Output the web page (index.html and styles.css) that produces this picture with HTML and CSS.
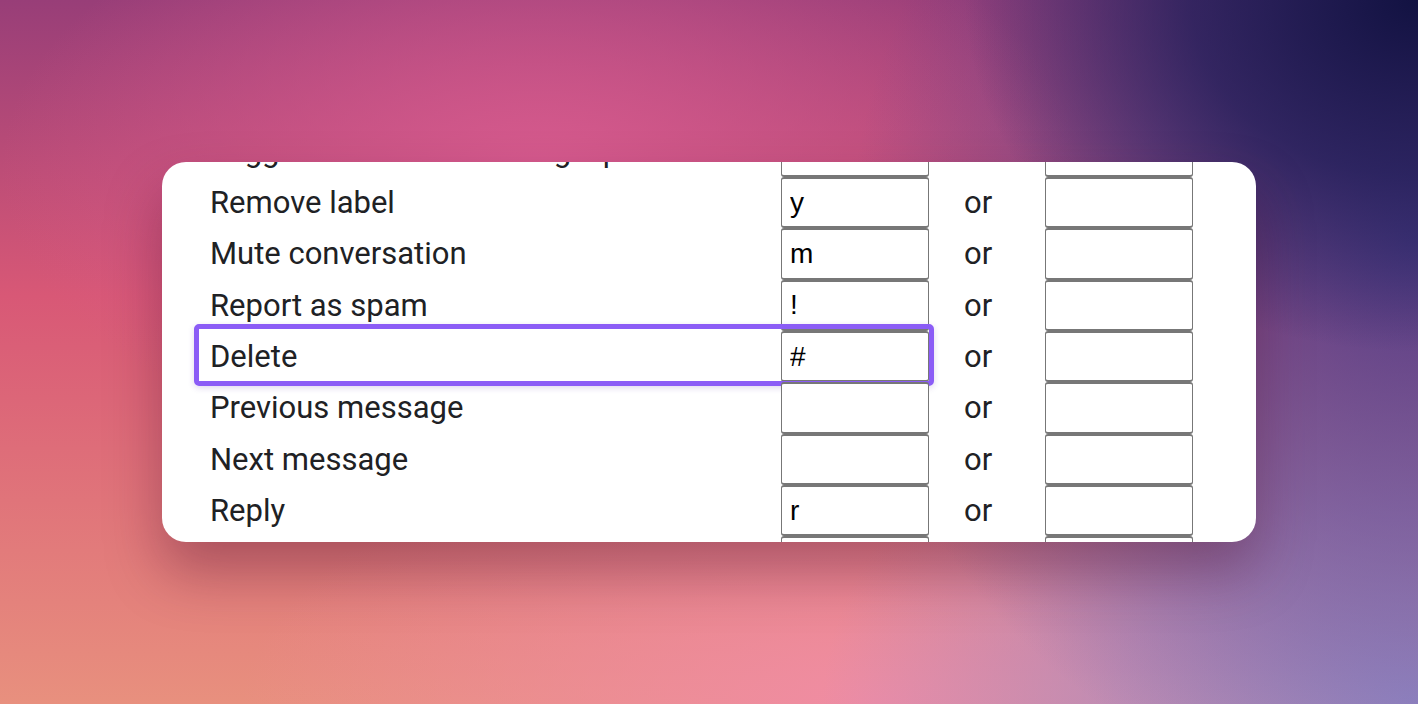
FILE: index.html
```html
<!DOCTYPE html>
<html>
<head>
	<meta charset="utf-8">
	<link rel="stylesheet" href="styles.css">
</head>
<body>

	<div class='card'>
		<div class='shortcuts'>
			<div class='row'>
				<div class='label'>Toggle conversations single pane</div>
				<input class='key' type='text' value=''>
				<div class='or'>or</div>
				<input class='key' type='text' value=''>
			</div>
			<div class='row'>
				<div class='label'>Remove label</div>
				<input class='key' type='text' value='y'>
				<div class='or'>or</div>
				<input class='key' type='text' value=''>
			</div>
			<div class='row'>
				<div class='label'>Mute conversation</div>
				<input class='key' type='text' value='m'>
				<div class='or'>or</div>
				<input class='key' type='text' value=''>
			</div>
			<div class='row'>
				<div class='label'>Report as spam</div>
				<input class='key' type='text' value='!'>
				<div class='or'>or</div>
				<input class='key' type='text' value=''>
			</div>
			<div class='row selected'>
				<div class='label'>Delete</div>
				<input class='key' type='text' value='#'>
				<div class='or'>or</div>
				<input class='key' type='text' value=''>
			</div>
			<div class='row'>
				<div class='label'>Previous message</div>
				<input class='key' type='text' value=''>
				<div class='or'>or</div>
				<input class='key' type='text' value=''>
			</div>
			<div class='row'>
				<div class='label'>Next message</div>
				<input class='key' type='text' value=''>
				<div class='or'>or</div>
				<input class='key' type='text' value=''>
			</div>
			<div class='row'>
				<div class='label'>Reply</div>
				<input class='key' type='text' value='r'>
				<div class='or'>or</div>
				<input class='key' type='text' value=''>
			</div>
			<div class='row'>
				<div class='label'>Reply all</div>
				<input class='key' type='text' value='a'>
				<div class='or'>or</div>
				<input class='key' type='text' value=''>
			</div>
		</div>
	</div>

</body>
</html>
```

FILE: styles.css
```css
html, body
{
	height: 100%;
}
body
{
	margin: 0;
	display: flex;
	align-items: center;
	justify-content: center;
	font-family: Roboto, "Liberation Sans", sans-serif;
	color: #202124;
	background-color: #d8607e;
	background-image:
		radial-gradient(ellipse 32% 50% at 100% 0%, #121242 0%, rgba(24, 24, 80, 0.7) 50%, rgba(40, 36, 100, 0) 100%),
		radial-gradient(ellipse 40% 80% at 100% 34%, rgba(66, 60, 138, 0.9) 0%, rgba(80, 70, 150, 0.55) 50%, rgba(100, 80, 160, 0) 100%),
		radial-gradient(ellipse 42% 55% at 100% 100%, #9a8cc6 0%, rgba(160, 140, 200, 0.6) 50%, rgba(170, 140, 200, 0) 100%),
		radial-gradient(ellipse 38% 42% at 38% 24%, #d65a8e 0%, rgba(214, 90, 142, 0) 100%),
		radial-gradient(ellipse 45% 40% at 62% 100%, #f08ca4 0%, rgba(240, 140, 164, 0) 100%),
		linear-gradient(to bottom, #983e78 0%, #d85876 42%, #e8907e 100%);
}


/*
	Card
*/
.card
{
	position: relative;
	width: 1094px;
	height: 380px;
	background-color: white;
	border-radius: 24px;
	overflow: hidden;
	box-shadow: 0 30px 55px rgba(70, 10, 40, 0.35);
}
.shortcuts
{
	margin-top: -36.33px;
	padding: 0 63px 0 48px;
	display: flex;
	flex-direction: column;
}


/*
	Rows
*/
.row
{
	position: relative;
	display: grid;
	grid-template-columns: 571px 148px 116px 148px;
	align-items: center;
	height: 51.33px;
}
.label
{
	font-size: 31px;
	white-space: nowrap;
}
.key
{
	box-sizing: border-box;
	width: 148px;
	height: 51.33px;
	margin: 0;
	padding: 0 8px;
	border: 2px solid #777;
	border-left-width: 1.5px;
	border-right-width: 1.5px;
	border-radius: 3px;
	background: white;
	font-family: "Liberation Sans", Arial, sans-serif;
	font-size: 28px;
	color: black;
	outline: none;
}
.or
{
	font-size: 31px;
	padding-left: 35px;
}


/*
	Highlight
*/
.selected::after
{
	content: '';
	position: absolute;
	left: -16px;
	top: -7px;
	width: 740px;
	height: 62px;
	box-sizing: border-box;
	border: 5px solid #8b5cf6;
	border-radius: 5px;
	box-shadow: 0 2px 6px rgba(80, 40, 160, 0.18);
	pointer-events: none;
}
```
